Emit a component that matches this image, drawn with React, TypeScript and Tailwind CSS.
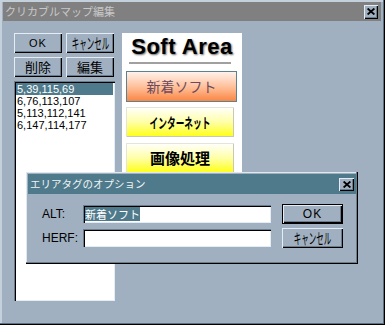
import React from "react";

const raised =
  "shadow-[inset_1px_1px_0_#e4ecf4,inset_-1px_-1px_0_#000,inset_-2px_-2px_0_#6c7c8c]";
const sunken =
  "shadow-[inset_1px_1px_0_#6c7c8c,inset_2px_2px_0_#000,inset_-1px_-1px_0_#e4ecf4]";

function CloseBtn() {
  return (
    <div
      className={`w-[15px] h-[13px] bg-[#a0b0c0] flex items-center justify-center ${raised}`}
    >
      <svg width="8" height="7" viewBox="0 0 8 7">
        <path d="M0.6 0.5L7.4 6.5M7.4 0.5L0.6 6.5" stroke="#000" strokeWidth="1.8" />
      </svg>
    </div>
  );
}

function Btn({ children, cls = "" }: { children: React.ReactNode; cls?: string }) {
  return (
    <div
      className={`h-[20px] flex items-center justify-center text-black bg-[#a0b0c0] overflow-hidden ${raised} ${cls}`}
    >
      {children}
    </div>
  );
}

function Cancel() {
  return (
    <span className="inline-block whitespace-nowrap text-[15px] leading-[16px] font-[family-name:Noto_Sans_CJK_JP,sans-serif] scale-x-[0.5]">
      キャンセル
    </span>
  );
}

export default function App() {
  const items = ["5,39,115,69", "6,76,113,107", "5,113,112,141", "6,147,114,177"];
  return (
    <div className="w-[385px] h-[325px] relative bg-[#a0b0c0] overflow-hidden font-[family-name:Liberation_Sans,Noto_Sans_CJK_JP,sans-serif] shadow-[inset_-1px_-1px_0_#000,inset_-2px_-2px_0_#5f6f7f,inset_2px_2px_0_#c4d0dc] pt-[2px]">
      {/* Title bar */}
      <div className="mx-[3px] mr-[4px] h-[19px] bg-[#808080] flex items-center justify-between pl-[2px] pr-[3px]">
        <span className="text-[11px] leading-[19px] text-[#c8c8c8] font-[family-name:Noto_Sans_CJK_JP,sans-serif]">
          クリカブルマップ編集
        </span>
        <div className="w-[14px] h-[14px] bg-[#a0b0c0] flex items-center justify-center shadow-[inset_1px_1px_0_#e4ecf4,inset_-1px_-1px_0_#000,inset_-2px_-2px_0_#6c7c8c]">
          <svg width="8" height="7" viewBox="0 0 8 7">
            <path d="M0.6 0.5L7.4 6.5M7.4 0.5L0.6 6.5" stroke="#000" strokeWidth="1.8" />
          </svg>
        </div>
      </div>

      {/* Content */}
      <div className="flex mt-[12px] ml-[14px] gap-[7px]">
        <div className="w-[101px] flex flex-col">
          <div className="grid grid-cols-[48px_48px] gap-x-[4px] gap-y-[4px]">
            <Btn cls="text-[11px] tracking-[1px]">OK</Btn>
            <Btn>
              <Cancel />
            </Btn>
            <Btn cls="text-[13px] font-[family-name:Noto_Sans_CJK_JP,sans-serif]">削除</Btn>
            <Btn cls="text-[13px] font-[family-name:Noto_Sans_CJK_JP,sans-serif]">編集</Btn>
          </div>
          <div className={`mt-[4px] h-[220px] bg-white pt-[2px] px-[2px] ${sunken}`}>
            {items.map((t, i) => (
              <div
                key={t}
                className={`h-[12px] leading-[12px] text-[11px] pl-[1px] ${
                  i === 0 ? "bg-[#4f7a8c] text-white" : "text-black"
                }`}
              >
                {t}
              </div>
            ))}
          </div>
        </div>

        {/* Soft Area panel */}
        <div className="w-[120px] h-[228px] bg-white pt-[2px] flex flex-col">
          <div className="h-[24px] leading-[24px] text-[22px] font-bold text-center tracking-[0.5px] text-black [text-shadow:1px_1px_2px_#666]">
            Soft Area
          </div>
          <div className="mt-[3px] ml-[7px] w-[102px] h-[2px] bg-[#a0a0a0]" />
          <div className="mt-[7px] ml-[4px] w-[111px] h-[31px] border border-[#5a8290] bg-[linear-gradient(#fff2ec,#ffbc94_55%,#fa8644)] flex items-center justify-center text-[14px] text-[#6c4a5e] font-[family-name:Noto_Sans_CJK_JP,sans-serif]">
            新着ソフト
          </div>
          <div className="mt-[5px] ml-[4px] w-[108px] h-[30px] bg-[linear-gradient(#ffffff,#ffffa8_50%,#ffff10)] shadow-[inset_1px_1px_0_#e4e4dc,inset_-1px_-1px_0_#c8c8b8] flex items-center justify-center overflow-hidden">
            <span className="text-[14px] font-bold text-black font-[family-name:Noto_Sans_CJK_JP,sans-serif] whitespace-nowrap scale-x-[0.62] inline-block">
              インターネット
            </span>
          </div>
          <div className="mt-[6px] ml-[4px] w-[108px] h-[30px] bg-[linear-gradient(#ffffff,#ffffa8_50%,#ffff10)] shadow-[inset_1px_1px_0_#e4e4dc,inset_-1px_-1px_0_#c8c8b8] flex items-center justify-center text-[15px] font-bold text-black font-[family-name:Noto_Sans_CJK_JP,sans-serif]">
            画像処理
          </div>
        </div>
      </div>

      {/* Dialog */}
      <div className="absolute left-[26px] top-[172px] w-[332px] h-[92px] bg-[#a0b0c0] p-[2px] shadow-[inset_-1px_-1px_0_#000,inset_-2px_-2px_0_#6c7c8c,inset_1px_1px_0_#dfe7ef]">
        <div className="h-[20px] bg-[#4f7a8c] flex items-center justify-between pl-[2px] pr-[2px]">
          <span className="text-[10.5px] leading-[20px] text-[#eef4f4] font-[family-name:Noto_Sans_CJK_JP,sans-serif]">
            エリアタグのオプション
          </span>
          <CloseBtn />
        </div>
        <div className="pl-[14px] pt-[10px] flex flex-col gap-[4px]">
          <div className="flex items-center h-[20px]">
            <div className="w-[41px] text-[12px] text-black">ALT:</div>
            <div className={`w-[188px] h-[18px] bg-white flex items-center pl-[2px] ${sunken}`}>
              <span className="bg-[#4f7a8c] text-white text-[11px] leading-[14px] font-[family-name:Noto_Sans_CJK_JP,sans-serif]">
                新着ソフト
              </span>
            </div>
            <div className="ml-[11px] w-[61px] h-[20px] border border-black">
              <div className="h-full flex items-center justify-center text-[12px] text-black tracking-[1px] shadow-[inset_1px_1px_0_#e4ecf4,inset_-1px_-1px_0_#000,inset_-2px_-2px_0_#6c7c8c]">
                OK
              </div>
            </div>
          </div>
          <div className="flex items-center h-[20px]">
            <div className="w-[41px] text-[12px] text-black">HERF:</div>
            <div className={`w-[188px] h-[18px] bg-white ${sunken}`} />
            <Btn cls="ml-[11px] w-[61px]">
              <Cancel />
            </Btn>
          </div>
        </div>
      </div>
    </div>
  );
}
